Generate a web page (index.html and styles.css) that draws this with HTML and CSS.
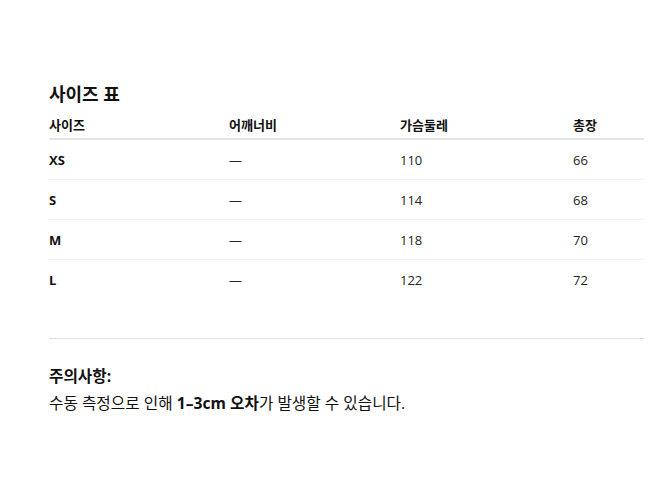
FILE: index.html
```html
<!DOCTYPE html>
<html lang="ko">
<head>
<meta charset="utf-8">
<link rel="stylesheet" href="styles.css">
</head>
<body>
<div class="page">
  <h2 class="title">사이즈 표</h2>
  <div class="table">
    <div class="row head">
      <div>사이즈</div><div>어깨너비</div><div>가슴둘레</div><div>총장</div>
    </div>
    <div class="row"><div class="size">XS</div><div>—</div><div>110</div><div>66</div></div>
    <div class="row"><div class="size">S</div><div>—</div><div>114</div><div>68</div></div>
    <div class="row"><div class="size">M</div><div>—</div><div>118</div><div>70</div></div>
    <div class="row last"><div class="size">L</div><div>—</div><div>122</div><div>72</div></div>
  </div>
  <div class="divider"></div>
  <div class="note">
    <div class="note-title">주의사항:</div>
    <div class="note-text">수동 측정으로 인해 <b>1–3cm 오차</b>가 발생할 수 있습니다.</div>
  </div>
</div>
</body>
</html>
```
FILE: styles.css
```css
html, body {
  margin: 0;
  padding: 0;
  background: #fff;
}
body {
  font-family: "Open Sans", "Noto Sans CJK KR", sans-serif;
  color: #111;
}
.page {
  padding: 82px 6px 0 49px;
}
.title {
  margin: 0;
  font-size: 18px;
  font-weight: 700;
  line-height: 24px;
}
.table {
  margin-top: 8px;
}
.row {
  box-sizing: border-box;
  display: grid;
  grid-template-columns: 180px 171px 173px 1fr;
  height: 40px;
  align-items: center;
  font-size: 13px;
  color: #222;
  border-bottom: 1px solid #f0f0f0;
}
.row.head {
  height: 26px;
  align-items: start;
  padding-top: 1px;
  font-weight: 700;
  color: #111;
  border-bottom: 2px solid #e4e4e4;
}
.row.last {
  border-bottom: none;
}
.size {
  font-weight: 700;
  color: #111;
}
.divider {
  margin-top: 38px;
  border-top: 1px solid #ddd;
}
.note {
  margin-top: 24px;
  font-size: 15.7px;
  line-height: 27px;
}
.note-title {
  font-weight: 700;
}
.note-text b {
  font-weight: 700;
}
```
